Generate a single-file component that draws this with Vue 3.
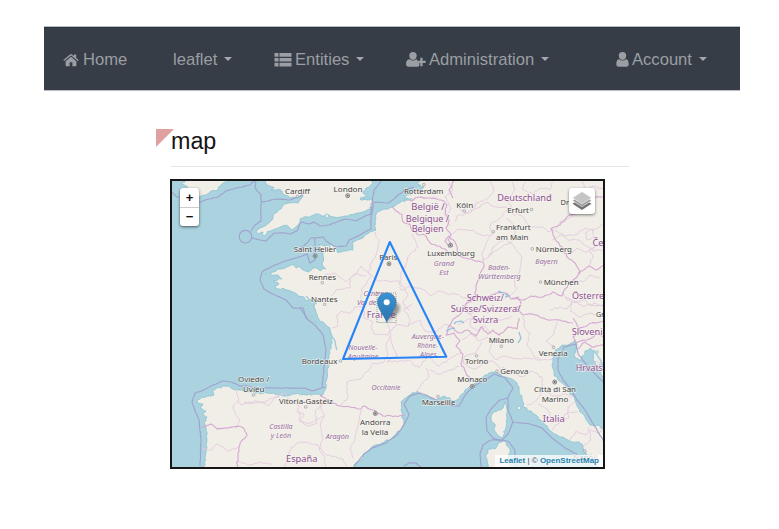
<script setup>
// Adds small deterministic bends between the points of a coast or border line.
let seed = 17
const rand = () => {
  seed = (seed * 16807) % 2147483647
  return seed / 2147483647 - 0.5
}
function rough(str, amount, closed) {
  const pts = str.trim().split(/\s+/).map((p) => p.split(',').map(Number))
  let out = 'M' + pts[0].join(',')
  for (let i = 1; i < pts.length; i++) {
    const [ax, ay] = pts[i - 1]
    const [bx, by] = pts[i]
    const len = Math.hypot(bx - ax, by - ay)
    const steps = len > 90 ? 1 : Math.max(1, Math.round(len / 2.6))
    for (let s = 1; s < steps; s++) {
      const t = s / steps
      out += `L${(ax + (bx - ax) * t + rand() * amount).toFixed(1)},${(ay + (by - ay) * t + rand() * amount).toFixed(1)}`
    }
    out += `L${bx},${by}`
  }
  return out + (closed ? 'Z' : '')
}

const lands = [
  // mainland
  '427,177 421,180 417,184 424,187 418,191 414,190 411,195 405,196 409,199 398,203 392,207 385,209 377,212 375,221 376,230 370,232 363,238 357,240 352,243 353,250 345,251 337,252 334,246 330,244 325,246 319,244 321,250 323,256 322,263 326,269 319,270 313,268 308,272 303,270 300,266 296,268 294,265 287,267 281,269 273,272 271,276 279,276 282,279 273,281 279,284 275,289 283,288 287,290 293,292 298,296 304,297 307,301 312,300 317,303 314,307 316,312 318,318 325,324 330,328 332,336 331,345 329,358 328,368 325,390 322,396 314,394 307,395 295,394 283,396 273,393 261,394 250,392 241,390 232,389 228,386 223,386 213,390 214,395 208,396 202,397 197,402 203,404 200,408 206,411 202,414 207,417 204,423 206,430 207,440 206,452 204,470 353,470 354,465 361,460 365,453 373,446 382,443 392,438 402,428 404,420 402,416 401,410 401,402 408,396 417,391 422,395 427,396 435,400 445,396 453,401 459,399 465,390 475,383 483,377 489,373 497,373 503,377 512,379 517,383 519,390 522,398 523,407 531,411 538,417 545,425 552,432 560,437 568,440 580,443 583,445 585,452 588,457 592,455 598,470 606,470 606,430 598,425 590,425 585,417 580,412 576,403 572,395 565,385 558,380 554,373 552,365 553,358 557,353 555,350 562,345 568,345 575,340 576,349 574,355 580,361 585,351 590,348 594,352 593,360 598,368 602,376 606,382 606,177',
  // Great Britain
  '264,177 267,185 274,187 271,190 282,191 285,195 290,198 298,198 303,193 302,198 298,203 289,203 283,205 281,209 273,215 271,221 265,226 256,231 258,234 263,232 264,236 270,231 275,229 280,227 288,226 292,230 297,226 300,219 308,217 315,214 322,216 328,214 334,217 345,216 358,213 367,210 373,207 374,201 367,200 360,199 367,196 362,192 366,188 371,185 373,177',
  // Ireland
  '184,177 185,182 181,184 188,188 185,192 193,193 199,197 206,195 211,191 218,190 221,185 228,182 227,177',
  '505,402 507,409 507,418 506,427 502,438 497,434 494,428 495,424 491,420 492,414 499,410 503,408',
  '487,470 488,464 486,455 488,449 495,449 498,443 505,441 510,449 508,456 510,470'
].map((l) => rough(l, 2.3, true))

const seas = [
  '172,192 177,197 186,198 200,202 209,199 218,197 226,191 237,188 250,185 257,178',
  '256,180 255,188 261,195 261,221 255,225 251,231',
  '252,238 260,240 266,241 274,233 285,233 290,234 297,231 301,222 309,224 314,222 320,226 329,225 337,222 345,219 356,221 365,216 372,214 373,203 376,202 389,203 397,196 405,190 414,187',
  '372,203 374,190 382,180',
  '371,203 371,229 365,232 358,236 349,240 346,246 335,247 326,241 323,237 311,238 307,243 299,250',
  '315,238 315,260 310,263 307,254 299,257 285,261 273,266 262,272 260,280 264,289 273,294 286,300 293,308 303,308 306,318 316,326 323,335 326,349 322,387',
  '262,202 276,199 290,200 303,195',
  '604,442 591,420 585,410 577,400 570,388 563,380 558,370 558,359 564,347 576,344 578,354 589,368 599,378 606,384',
  '325,387 312,391 305,388 292,388 272,388 258,388 248,386 240,386 231,382 222,381 211,386 204,390 195,393 192,402 195,411 199,420 201,440 200,466',
  '354,466 364,454 372,448 386,443 398,434 405,423 409,414 404,404 410,396 420,393 428,396 445,405 459,406 466,394 474,386 485,380 494,374 505,378 513,388 508,397 508,410 513,422 530,424 542,428 552,438 565,448 580,456 588,466',
  '508,398 500,400 491,409 486,418 487,431 493,438 501,441 508,434 513,422',
  '502,440 491,440 483,445 480,454 481,467',
  '502,440 509,442 515,450 515,467',
  '404,466 409,463 416,463 421,467',
  '307,318 300,308'
].map((l) => rough(l, 0.5))

const borders = [
  '392,206 396,211 402,214 403,222 410,224 412,230 418,235 425,235 430,243 437,246 445,249 448,254',
  '404,199 412,201 419,197 430,198 441,200 447,205 445,214 449,220 446,228 451,235 448,240 453,247',
  '449,248 445,241 449,236 455,242 458,253',
  '453,198 449,190 454,181',
  '456,254 464,258 473,260 483,262 484,267 479,276 476,286 475,298',
  '475,298 466,304 462,312 455,318 449,326 446,335 454,333 460,341 456,346 463,354 461,363 466,373 472,380',
  '475,297 485,298 497,293 506,293 511,299 518,297 521,304 516,309 523,315 532,314 542,318 551,320 565,321 573,323',
  '450,325 459,333 467,330 476,336 481,327 488,334 493,330 499,335 508,327 517,329 519,318',
  '512,298 523,300 531,296 543,297 553,292 562,296 565,289 573,280 580,273 575,263 567,257 562,247 555,239 551,229 560,225 569,215 578,213 585,206 591,198 604,196',
  '578,273 589,266 596,270 605,265',
  '573,318 580,330 573,337 576,344',
  '575,342 587,340 597,334 604,337',
  '579,328 592,323 604,321',
  '577,349 585,342 592,347 604,345',
  '320,394 328,402 340,406 350,407 361,409 363,406 374,410 383,416 395,416 405,415',
  '201,428 211,424 217,429 233,427 242,427 247,435 240,443 238,455 237,467'
].map((l) => rough(l, 1.6))

const regions = [
  '375,232 379,242 376,255 370,265 369,274 378,281 399,281 401,290 411,287',
  '412,234 418,247 410,254 406,264 401,273 400,282 408,294 403,303 409,310',
  '411,287 422,289 431,296 438,291 447,294 455,294 463,298 475,297',
  '366,276 357,274 350,278 346,282 334,273 325,275',
  '371,276 363,287 361,298 364,306 355,307 349,314 341,311 337,315 338,326 332,328',
  '369,274 361,266 358,272 350,278 350,288 336,290 331,296',
  '363,306 364,318 373,322 371,328 374,334 388,335 396,324 409,326 410,319 404,309 412,304',
  '388,324 391,334 386,344 388,354 383,363 373,363 368,371 360,379 347,382 347,400 340,406',
  '391,336 393,347 398,355 387,362 408,360 419,368 428,356 439,366 452,357 460,354',
  '426,368 429,376 421,385 416,392',
  '409,325 420,320 425,331 435,332 445,324 451,327',
  '430,370 439,374 451,370 459,366',
  '235,390 239,399 233,406 235,413 240,420 236,429',
  '244,403 257,401 268,406 276,397 286,393',
  '286,395 291,401 299,405 297,411 304,414 299,421 309,424 317,419 324,416 320,405 327,402',
  '238,401 242,405 253,403 264,402 273,398 282,394',
  '299,411 300,421 309,426 317,423 315,411 323,405',
  '324,416 320,426 323,438 319,449 325,458 326,467',
  '361,410 360,420 356,431 354,442 350,450 353,458',
  '284,467 289,452 297,443 307,442 318,445 326,455 343,459 347,466',
  '202,449 212,450 218,444 228,451 238,447',
  '238,461 250,465 260,462 272,464',
  '448,182 453,190 445,197 451,208 446,218 450,226',
  '451,235 458,229 473,230 481,235 492,235 490,225 500,218 507,210 512,209',
  '455,222 457,216 470,213 476,203 487,199 494,190 491,182',
  '512,182 515,190 508,201 512,210 523,217 529,226 541,227 548,232 553,229',
  '526,182 522,189 533,194 541,188 550,190 553,182',
  '482,260 489,257 493,247 505,239 514,246 521,256 520,271 514,280 517,289 510,296',
  '506,218 514,225 515,238 509,243 500,248 489,256',
  '491,235 486,243 482,252 483,261',
  '457,204 465,213 480,207 488,202 496,207 506,207 515,216',
  '556,229 563,220 571,217 571,211 580,204 586,204',
  '553,230 566,236 575,235 586,228 593,231 604,224',
  '585,233 593,229 594,237 587,240 585,233',
  '552,240 560,235 568,240 579,240 588,247 594,251 604,250',
  '567,254 577,248 587,252 595,246 603,242',
  '589,265 593,256 590,250 597,245',
  '563,291 567,300 572,302 570,311 579,317 592,313 600,318',
  '573,280 583,282 590,275 600,278',
  '550,310 560,307 567,309 574,301 584,307 594,303 604,306',
  '565,297 575,303 584,299 591,306 604,304',
  '466,312 473,317 470,325 477,331 485,326 491,334',
  '469,298 465,307 470,314 480,309 488,313 499,308 506,312 514,307',
  '458,325 468,319 480,321 489,317 502,320 512,316',
  '462,340 471,334 480,341 487,337 493,343 489,351 496,360 504,356 515,359 529,358 540,360 553,359',
  '523,316 525,328 530,333 527,345 533,354 540,360',
  '557,322 554,334 546,341 555,347',
  '463,363 474,369 485,363 493,361 499,367 501,374',
  '482,342 476,353 465,356 463,364',
  '502,367 512,372 522,377 532,371 542,377 543,390 537,400 527,405',
  '544,390 554,396 566,394 572,398',
  '538,404 547,409 551,418 561,419 569,412 578,412',
  '552,430 560,421 569,418 568,407 574,402',
  '570,440 576,431 586,435 589,427',
  '583,447 591,440 590,430 598,433 604,430',
  '581,371 590,370 596,361 604,364',
  '582,181 585,190 593,186 604,189'
].map((l) => rough(l, 2))

const lakes = ['498,291 503,293 509,296 505,297', '454,324 456,322 461,321 464,323', '519,332 521,338 518,343', '446,331 450,329 455,328'].map((l) => rough(l, 0.3))
const estuaries = ['329,332 334,339 337,350', '374,201 367,197 360,198', '398,203 406,199 412,199', '404,196 411,191 417,190', '274,190 281,190', '329,244 331,250', '593,350 601,361 603,368', '306,296 309,300'].map((l) => rough(l, 0.8))
const isles = [
  [327, 216, 1.9], [519, 408, 1.9], [510, 408, 0.9], [266, 274, 0.7], [306, 307, 1.3], [312, 317, 1], [315, 322, 0.9], [597, 352, 1.3], [600, 365, 1], [584, 366, 1.2]
]

// text, centre x, baseline, width, kind
const labels = [
  ['Cardiff', 297.5, 193.7, 25, 'town'], ['London', 348, 191.5, 29, 'town'], ['Saint Helier', 315, 251.5, 42.5, 'town'],
  ['Rennes', 322.3, 279.7, 27.3, 'town'], ['Nantes', 324.2, 301.7, 26.5, 'town'], ['Paris', 388.3, 259.9, 18, 'town'],
  ['Rotterdam', 423.7, 194, 39.5, 'town'], ['België /', 428, 210.3, 33.5, 'country'], ['Belgique /', 427.5, 221.5, 43.5, 'country'],
  ['Belgien', 427.7, 232.3, 32, 'country'], ['Köln', 464.7, 207.9, 17, 'town'], ['Hannover', 510, 181.3, 36, 'town'],
  ['Deutschland', 524.5, 200.9, 54.5, 'country'], ['Erfurt', 518, 212.7, 21.7, 'town'], ['Dr', 564.8, 205.1, 8.6, 'town'],
  ['Frankfurt', 513.3, 230.4, 34.7, 'town'], ['am Main', 512.2, 240.4, 32.3, 'town'], ['Nürnberg', 553.8, 252.3, 36.3, 'town'],
  ['Bayern', 546.5, 263.9, 22.3, 'region'], ['Luxembourg', 451, 255.6, 47.7, 'town'], ['Grand', 444, 266.4, 20.3, 'region'],
  ['Est', 444, 275.2, 9.5, 'region'], ['Baden-', 499.2, 269.9, 22.3, 'region'], ['Württemberg', 499.5, 278.9, 42.3, 'region'],
  ['München', 561.2, 284.9, 35, 'town'], ['Schweiz/', 485.3, 300.9, 37.3, 'country'], ['Suisse/Svizzera/', 485.7, 311.9, 70, 'country'],
  ['Svizra', 485.5, 322.9, 25.7, 'country'], ['Österre', 588, 299, 32, 'country'], ['Če', 598, 245.7, 11, 'country'],
  ['Gr', 600.2, 317, 8.2, 'town'], ['Centre-', 374.5, 296, 22, 'region'], ['Val de Loire', 375.5, 304.6, 37, 'region'],
  ['France', 381.2, 317.6, 29, 'country'], ['Bordeaux', 319.5, 363.9, 35.6, 'town'], ['Nouvelle-', 363, 349.9, 29, 'region'],
  ['Aquitaine', 363, 358.6, 30.6, 'region'], ['Auvergne-', 427.8, 338.9, 32.3, 'region'], ['Rhône-', 427.5, 347.8, 20.5, 'region'],
  ['Alpes', 428.3, 356.6, 16.7, 'region'], ['Occitanie', 386, 389.7, 29, 'region'], ['Marseille', 438.5, 404.9, 33.7, 'town'],
  ['Andorra', 375.2, 424.9, 30.3, 'town'], ['la Vella', 375, 434.9, 26.7, 'town'], ['Aragón', 337.3, 438.7, 23.3, 'region'],
  ['Vitoria-Gasteiz', 305.8, 403.6, 53.7, 'town'], ['Oviedo /', 253.7, 381.9, 31.3, 'town'], ['Uviéu', 253.7, 391.9, 21.3, 'town'],
  ['Castilla', 281, 429.2, 23.3, 'region'], ['y León', 281, 437.9, 20.3, 'region'], ['España', 301.7, 462.2, 31.3, 'country'],
  ['Milano', 501.3, 343.4, 25.3, 'town'], ['Torino', 476.7, 364.2, 23.3, 'town'], ['Genova', 514.3, 373.9, 28, 'town'],
  ['Monaco', 472.3, 382.2, 30, 'town'], ['Venezia', 553.2, 355.6, 29, 'town'], ['Città di San', 555, 392.4, 42, 'town'],
  ['Marino', 555, 402.4, 26.7, 'town'], ['Italia', 553.7, 422, 22, 'country'], ['Sloveni', 587.2, 335.2, 31, 'country'],
  ['Hrvats', 589.3, 370.7, 27, 'country'], ['Napoli', 585.3, 460, 24.5, 'town']
]
const capitals = [[347.7, 195.7], [315.2, 256], [389, 263.8], [450.5, 245.2], [375.3, 413.5], [472.3, 386.3], [554.7, 382]]
const towns = [
  [297.5, 196.3], [322.3, 282.7], [324.7, 304.3], [423.8, 184.7], [464.3, 211], [531.5, 209.5], [493.3, 231.7], [532.3, 248.8],
  [540.5, 282], [340.5, 361], [438, 396.5], [305.7, 407], [253.5, 395], [501.3, 346.3], [476.5, 355.8], [497, 371.2], [553.5, 347.3], [585, 451]
]
</script>

<template>
  <div class="page">
    <nav class="navbar">
      <a class="item home">
        <svg class="icon" width="16" height="14" viewBox="0 0 16 14">
          <path d="M8 3.700 13.400 8.200V12.500Q13.400 13.200 12.700 13.200H9.400V9.200H6.600V13.200H3.300Q2.600 13.200 2.600 12.500V8.200Z" />
          <path d="M.3 7.100 7.300 1.200Q8 .7 8.700 1.200L11 3.100V1.400H13.200V5L15.700 7.100 14.900 8 8 2.600 1.100 8Z" />
        </svg>
        <span>Home</span>
      </a>
      <a class="item leaflet"><span>leaflet</span><i class="caret"></i></a>
      <a class="item entities">
        <svg class="icon" width="18" height="14" viewBox="0 0 18 14">
          <path d="M.5 0h4v3.700h-4zM5.500 0h12v3.700h-12zM.5 4.900h4v3.700h-4zM5.500 4.900h12v3.700h-12zM.5 9.800h4v3.700h-4zM5.500 9.800h12v3.700h-12z" />
        </svg>
        <span>Entities</span><i class="caret"></i>
      </a>
      <a class="item admin">
        <svg class="icon" width="20" height="15" viewBox="0 0 20 15">
          <path d="M7 0a3.700 3.700 0 0 1 3.700 3.800C10.700 6 9.200 8 7 8S3.300 6 3.300 3.800A3.700 3.700 0 0 1 7 0ZM3.700 7.200Q7 10 10.300 7.200L11.500 7.900V10.800H13.300V13.700Q12.800 14.700 11.500 14.700H2.600Q0 14.700 0 12Q.1 7.300 3.700 7.200Z" />
          <path d="M14.300 5.700h2.300v3.100h3.100v2.300h-3.100v3.100h-2.300v-3.100h-3.100V8.800h3.100z" />
        </svg>
        <span>Administration</span><i class="caret"></i>
      </a>
      <a class="item account">
        <svg class="icon" width="13" height="15" viewBox="0 0 13 15">
          <path d="M6.500 0a3.700 3.700 0 0 1 3.700 3.800C10.200 6 8.700 8 6.500 8S2.800 6 2.800 3.800A3.700 3.700 0 0 1 6.500 0ZM3.200 7.200Q6.500 10 9.800 7.200Q12.600 7.400 12.700 12Q12.700 14.700 10.200 14.700H2.800Q.3 14.700 .3 12Q.4 7.400 3.200 7.200Z" />
        </svg>
        <span>Account</span><i class="caret"></i>
      </a>
    </nav>

    <main class="content">
      <h1 class="title">map</h1>
      <div class="map">
        <svg class="tiles" width="431" height="286" viewBox="172 181 431 286">
          <g class="land"><path v-for="(d, i) in lands" :key="i" :d="d" /></g>
          <g class="isle"><circle v-for="(c, i) in isles" :key="i" :cx="c[0]" :cy="c[1]" :r="c[2]" /></g>
          <g class="region-line"><path v-for="(d, i) in regions" :key="i" :d="d" /></g>
          <g class="border-line"><path v-for="(d, i) in borders" :key="i" :d="d" /></g>
          <g class="estuary"><path v-for="(d, i) in estuaries" :key="i" :d="d" /></g>
          <g class="lake"><path v-for="(d, i) in lakes" :key="i" :d="d" /></g>
          <g class="sea-line">
            <path v-for="(d, i) in seas" :key="i" :d="d" />
            <circle cx="245.500" cy="236.700" r="6.300" />
          </g>
          <g class="town-dot"><rect v-for="(t, i) in towns" :key="i" :x="t[0] - 1.2" :y="t[1] - 1.2" width="2.4" height="2.4" rx=".7" /></g>
          <g v-for="(c, i) in capitals" :key="i" class="capital-dot">
            <circle :cx="c[0]" :cy="c[1]" r="2" /><circle class="core" :cx="c[0]" :cy="c[1]" r=".9" />
          </g>
          <text v-for="(l, i) in labels" :key="i" :class="l[4]" :x="l[1] - l[3] / 2" :y="l[2]" :textLength="l[3]" lengthAdjust="spacingAndGlyphs">{{ l[0] }}</text>
          <path class="shape" d="M389.800 242 446.300 356.700 343 359Z" />
          <defs>
            <linearGradient id="pin" x1="0" y1="0" x2="0" y2="1">
              <stop offset="0" stop-color="#3b93d2" /><stop offset="1" stop-color="#2a73ad" />
            </linearGradient>
            <filter id="soft" x="-30%" y="-30%" width="160%" height="160%"><feGaussianBlur stdDeviation="1.500" /></filter>
          </defs>
          <path class="shadow" filter="url(#soft)" d="M387 322 389 309Q392 303 397 303Q403 308 397 314Z" />
          <rect class="focus" x="377" y="293" width="19" height="29.500" />
          <path class="pin" d="M386.800 322.500C385.500 317 377.500 309.500 377.500 302A9.300 9.300 0 0 1 396.100 302C396.100 309.500 388.100 317 386.800 322.500Z" />
          <circle cx="386.700" cy="302.300" r="3" fill="#fff" />
        </svg>
        <div class="zoom">
          <a>+</a>
          <a>−</a>
        </div>
        <div class="layers">
          <svg width="20" height="20" viewBox="0 0 20 20">
            <path fill="#747474" d="M.5 12.700 10 18.900 19.500 12.700 17.300 11.300 10 15.500 2.700 11.300Z" />
            <path fill="#9d9d9d" stroke="#fff" stroke-width=".4" d="M.5 9.600 10 15.800 19.500 9.600 17.300 8.200 10 12.500 2.700 8.200Z" />
            <path fill="#c5c5c5" stroke="#fff" stroke-width=".4" d="M.5 6.800 10 .7 19.500 6.800 10 13Z" />
          </svg>
        </div>
        <div class="attribution"><a>Leaflet</a> | © <a>OpenStreetMap</a></div>
      </div>
    </main>
  </div>
</template>

<style>
body { margin: 0; background: #fff; }
</style>

<style scoped>
.page {
  box-sizing: border-box;
  width: 779px;
  height: 529px;
  padding: 26px 39px 0 44px;
  font-family: "Liberation Sans", Arial, sans-serif;
}
.navbar {
  box-sizing: border-box;
  display: flex;
  align-items: center;
  height: 65px;
  padding: 3px 0 0 19px;
  border-top: 1px solid #b9bcc0;
  border-bottom: 1px solid #b9bdc5;
  background: #363d47;
  box-shadow: inset 0 1px #25384a;
  color: #9b9ea3;
  font-size: 16.600px;
}
.item { display: flex; align-items: center; height: 20px; white-space: nowrap; }
.item span { line-height: 20px; }
.icon { fill: #9b9ea3; margin: 0 3px 1px 0; }
.home { width: 110px; }
.home .icon { margin-right: 4px; }
.leaflet { width: 101px; }
.entities { width: 132px; }
.admin { width: 210px; }
.caret {
  margin: 0 0 2px 7px;
  border: 4px solid transparent;
  border-top-color: #a4a7ab;
  border-bottom: 0;
}
.content { position: relative; width: 458px; margin-left: 127px; padding-top: 37px; }
.content::before {
  content: "";
  position: absolute;
  left: -15px;
  top: 38px;
  border-top: 18px solid #dfa0a0;
  border-right: 18px solid transparent;
}
.title {
  position: relative;
  box-sizing: border-box;
  height: 39px;
  margin: 0 0 12px;
  border-bottom: 1px solid #e4e4e4;
  color: #151515;
  font-size: 23.300px;
  font-weight: 400;
  line-height: 26px;
}
.map {
  position: relative;
  width: 431px;
  height: 286px;
  margin-left: -1px;
  border: 2px solid #161616;
  background: #aad3df;
}
.tiles { display: block; }
.tiles path { stroke-linejoin: round; }
.land path, .isle circle { fill: #f1eee8; stroke: #82bfcd; stroke-width: .7; }
.region-line path { fill: none; stroke: #e3c9df; stroke-width: .9; }
.border-line path { fill: none; stroke: #d5a9d1; stroke-width: 1.100; }
.sea-line path, .sea-line circle { fill: none; stroke: #a09ccb; stroke-width: 1.150; opacity: .9; }
.estuary path { fill: none; stroke: #9fcfdd; stroke-width: 1.500; }
.lake path { fill: none; stroke: #91bddd; stroke-width: 1.200; }
.town-dot rect { fill: #f5f3ee; stroke: #888; stroke-width: .6; }
.capital-dot circle { fill: #d5d3cf; stroke: #666; stroke-width: .7; }
.capital-dot .core { fill: #666; stroke: none; }
.tiles text { font-family: "Noto Sans", sans-serif; paint-order: stroke; stroke: #f7f5f1; stroke-opacity: .75; stroke-width: 1.300px; }
.tiles .town { font-size: 7.800px; fill: #444; }
.tiles .region { font-size: 7.400px; font-style: italic; fill: #986da0; }
.tiles .country { font-size: 8.600px; fill: #8d4f91; }
.tiles .shape { fill: none; stroke: #2683f8; stroke-width: 2.100; }
.shadow { fill: #333; opacity: .45; }
.focus { fill: none; stroke: #777; stroke-width: .7; stroke-dasharray: 1 1; }
.pin { fill: url(#pin); stroke: #2b70a8; stroke-width: .6; }
.zoom {
  position: absolute;
  left: 8px;
  top: 7px;
  width: 19px;
  border-radius: 3px;
  background: #fff;
  box-shadow: 0 1px 3px rgba(0, 0, 0, .6);
}
.zoom a {
  display: block;
  height: 19px;
  color: #111;
  font: bold 13px/19px "Liberation Sans", Arial, sans-serif;
  text-align: center;
}
.zoom a + a { height: 18px; border-top: 1px solid #ccc; line-height: 18px; }
.layers {
  position: absolute;
  right: 8px;
  top: 7px;
  display: flex;
  align-items: center;
  justify-content: center;
  width: 26px;
  height: 26px;
  border-radius: 3px;
  background: #fff;
  box-shadow: 0 1px 3px rgba(0, 0, 0, .5);
}
.attribution {
  position: absolute;
  right: 0;
  bottom: 0;
  padding: 0 4px;
  background: rgba(255, 255, 255, .75);
  color: #444;
  font-size: 8px;
  line-height: 12px;
  white-space: nowrap;
}
.attribution a { color: #2b83ad; font-weight: 700; }
</style>
